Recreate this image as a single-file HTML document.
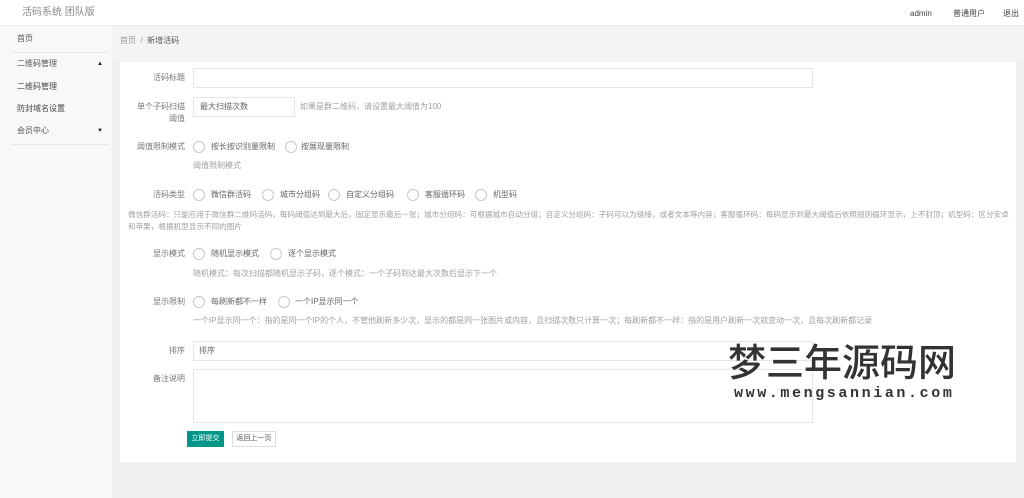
<!DOCTYPE html>
<html><head><meta charset="utf-8"><style>
*{margin:0;padding:0;box-sizing:border-box}
body{width:1024px;height:498px;overflow:hidden;background:#f0f0f2;font-family:"Liberation Sans","Noto Sans CJK SC",sans-serif;font-size:8px;color:#666;position:relative}
.a{position:absolute;white-space:nowrap;line-height:10px}
.hd{position:absolute;left:0;top:0;width:1024px;height:26px;background:#fff;border-bottom:1px solid #eee}
.sb{position:absolute;left:0;top:26px;width:112px;height:472px;background:#f8f8fa}
.bc{position:absolute;left:112px;top:26px;width:912px;height:36px;background:#f4f4f5}
.card{position:absolute;left:120px;top:62px;width:896px;height:400px;background:#fff}
.in{position:absolute;border:1px solid #e6e6e6;background:#fff}
.r{position:absolute;width:12px;height:12px;border:1px solid #c8c8c8;border-radius:50%;background:#fff}
.lb{position:absolute;text-align:right;width:80px;line-height:10px;color:#777}
.h{color:#a0a0a0}
.line{position:absolute;left:12px;width:96px;height:1px;background:#e8e8e8}
</style></head><body>
<div class="hd"></div>
<div class="a" style="left:22px;top:8px;font-size:10px;color:#888">活码系统 团队版</div>
<div class="a" style="left:910px;top:9px;color:#444">admin</div>
<div class="a" style="left:953px;top:9px;color:#444">普通用户</div>
<div class="a" style="left:1003px;top:9px;color:#444">退出</div>
<div class="sb"></div>
<div class="a" style="left:17px;top:34px;color:#555">首页</div>
<div class="line" style="top:52px"></div>
<div class="a" style="left:17px;top:59px;color:#555">二维码管理</div>
<div class="a" style="left:97px;top:59px;font-size:6px;color:#222">▲</div>
<div class="a" style="left:17px;top:82px;color:#444">二维码管理</div>
<div class="a" style="left:17px;top:104px;color:#444">防封域名设置</div>
<div class="a" style="left:17px;top:126px;color:#555">会员中心</div>
<div class="a" style="left:97px;top:126px;font-size:6px;color:#222">▼</div>
<div class="line" style="top:144px"></div>
<div class="bc"></div>
<div class="a" style="left:120px;top:36px;color:#999">首页 &nbsp;/&nbsp; <span style="color:#555">新增活码</span></div>
<div class="card"></div>

<div class="lb" style="left:105px;top:73px">活码标题</div>
<div class="in" style="left:193px;top:68px;width:620px;height:20px"></div>

<div class="lb" style="left:105px;top:101px;line-height:12px">单个子码扫描<br>阈值</div>
<div class="in" style="left:193px;top:97px;width:102px;height:20px"></div>
<div class="a" style="left:200px;top:102px;color:#666">最大扫描次数</div>
<div class="a h" style="left:300px;top:102px">如果是群二维码，请设置最大阈值为100</div>

<div class="lb" style="left:105px;top:142px">阈值限制模式</div>
<div class="r" style="left:193px;top:141px"></div><div class="a" style="left:211px;top:142px">按长按识别量限制</div>
<div class="r" style="left:285px;top:141px"></div><div class="a" style="left:301px;top:142px">按展现量限制</div>
<div class="a h" style="left:193px;top:161px">阈值限制模式</div>

<div class="lb" style="left:105px;top:190px">活码类型</div>
<div class="r" style="left:193px;top:189px"></div><div class="a" style="left:211px;top:190px">微信群活码</div>
<div class="r" style="left:262px;top:189px"></div><div class="a" style="left:280px;top:190px">城市分组码</div>
<div class="r" style="left:328px;top:189px"></div><div class="a" style="left:346px;top:190px">自定义分组码</div>
<div class="r" style="left:407px;top:189px"></div><div class="a" style="left:425px;top:190px">客服循环码</div>
<div class="r" style="left:475px;top:189px"></div><div class="a" style="left:493px;top:190px">机型码</div>
<div class="a h" style="left:128px;top:209px;line-height:12px;font-size:7.6px">微信群活码：只能应用于微信群二维码活码，每码阈值达到最大后，固定显示最后一张；城市分组码：可根据城市自动分组；自定义分组码：子码可以为链接，或者文本等内容；客服循环码：每码显示到最大阈值后依照规则循环显示，上不封顶；机型码：区分安卓<br>和苹果，根据机型显示不同的图片</div>

<div class="lb" style="left:105px;top:249px">显示模式</div>
<div class="r" style="left:193px;top:248px"></div><div class="a" style="left:211px;top:249px">随机显示模式</div>
<div class="r" style="left:270px;top:248px"></div><div class="a" style="left:288px;top:249px">逐个显示模式</div>
<div class="a h" style="left:193px;top:269px">随机模式：每次扫描都随机显示子码，逐个模式：一个子码到达最大次数后显示下一个</div>

<div class="lb" style="left:105px;top:297px">显示限制</div>
<div class="r" style="left:193px;top:296px"></div><div class="a" style="left:211px;top:297px">每刷新都不一样</div>
<div class="r" style="left:278px;top:296px"></div><div class="a" style="left:295px;top:297px">一个IP显示同一个</div>
<div class="a h" style="left:193px;top:316px">一个IP显示同一个：指的是同一个IP的个人，不管他刷新多少次，显示的都是同一张图片或内容，且扫描次数只计算一次；每刷新都不一样：指的是用户刷新一次就变动一次，且每次刷新都记录</div>

<div class="lb" style="left:105px;top:346px">排序</div>
<div class="in" style="left:193px;top:341px;width:620px;height:20px"></div>
<div class="a" style="left:199px;top:346px">排序</div>

<div class="lb" style="left:105px;top:374px">备注说明</div>
<div class="in" style="left:193px;top:369px;width:620px;height:54px"></div>

<div class="a" style="left:187px;top:431px;width:37px;height:16px;background:#009688;color:#fff;line-height:16px;text-align:center;font-size:7px">立即提交</div>
<div class="a" style="left:232px;top:431px;width:44px;height:16px;border:1px solid #ddd;background:#fff;color:#555;line-height:14px;text-align:center;font-size:7px">返回上一页</div>

<div class="a" style="left:728px;top:337px;font-size:38px;line-height:46px;color:#333;font-family:'Noto Sans CJK SC',sans-serif;font-weight:500;letter-spacing:0px">梦三年源码网</div>
<div class="a" style="left:734px;top:385px;font-size:15px;line-height:18px;color:#333;font-family:'Liberation Mono',monospace;font-weight:bold;letter-spacing:2.6px">www.mengsannian.com</div>
</body></html>
